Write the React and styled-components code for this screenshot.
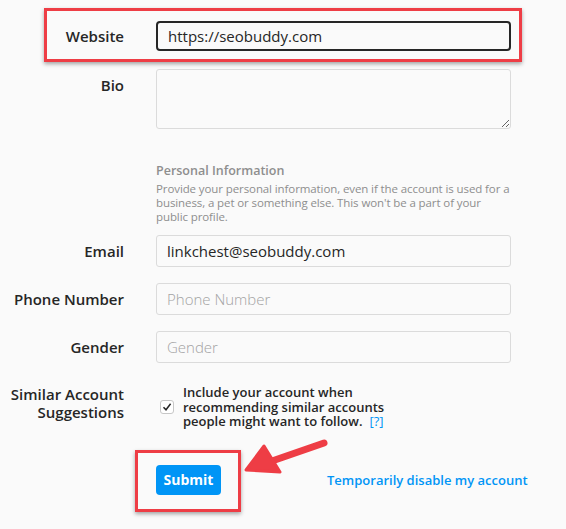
import React from 'react';
import styled, { createGlobalStyle } from 'styled-components';

const GlobalStyle = createGlobalStyle`
  html, body {
    margin: 0;
    padding: 0;
    background: #fafafa;
  }
  body {
    font-family: "Open Sans", "Noto Sans", sans-serif;
    color: #262626;
  }
`;

function Arrow() {
  return (
    <StArrow width="90" height="45" viewBox="0 0 90 45">
      <path d="M82 6 L30 24" stroke="#ee3d45" strokeWidth="7" strokeLinecap="round" />
      <path d="M4 33 L22 9 L38 35 Z" fill="#ee3d45" stroke="#ee3d45" strokeWidth="3" strokeLinejoin="round" />
    </StArrow>
  );
}

function CheckIcon() {
  return (
    <svg width="10" height="10" viewBox="0 0 10 10">
      <path d="M1.5 5.2 L4 7.8 L8.6 1.8" fill="none" stroke="#262626" strokeWidth="1.5" />
    </svg>
  );
}

function App() {
  return (
    <>
      <GlobalStyle />
      <StPage>
        <StForm>
          <StRow $highlight>
            <StLabel>Website</StLabel>
            <StInput $focused defaultValue="https://seobuddy.com" />
          </StRow>

          <StRow>
            <StLabel $top>Bio</StLabel>
            <StTextarea />
          </StRow>

          <StRow>
            <span />
            <StInfo>
              <StInfoTitle>Personal Information</StInfoTitle>
              <StInfoText>
                Provide your personal information, even if the account is used for a
                <br />
                business, a pet or something else. This won't be a part of your
                <br />
                public profile.
              </StInfoText>
            </StInfo>
          </StRow>

          <StRow>
            <StLabel>Email</StLabel>
            <StInput defaultValue="linkchest@seobuddy.com" />
          </StRow>

          <StRow>
            <StLabel>Phone Number</StLabel>
            <StInput placeholder="Phone Number" />
          </StRow>

          <StRow>
            <StLabel>Gender</StLabel>
            <StInput placeholder="Gender" />
          </StRow>

          <StRow>
            <StLabel $multi>Similar Account Suggestions</StLabel>
            <StCheckRow>
              <StCheckBox>
                <CheckIcon />
              </StCheckBox>
              <StCheckText>
                Include your account when recommending similar accounts people
                might want to follow.<StHelp>[?]</StHelp>
              </StCheckText>
            </StCheckRow>
          </StRow>

          <StActions>
            <StSubmitWrap>
              <StSubmit>Submit</StSubmit>
              <Arrow />
            </StSubmitWrap>
            <StLink>Temporarily disable my account</StLink>
          </StActions>
        </StForm>
      </StPage>
    </>
  );
}

const StPage = styled.div`
  width: 566px;
  height: 529px;
  overflow: hidden;
  background: #fafafa;
`;

const StForm = styled.div`
  display: flex;
  flex-direction: column;
  gap: 16px;
  padding: 21px 0 0 0;
`;

const StRow = styled.div`
  position: relative;
  display: grid;
  grid-template-columns: 124px 355px;
  column-gap: 32px;
  align-items: center;

  ${(p) =>
    p.$highlight &&
    `
    margin-bottom: 2px;
    &::after {
      content: '';
      position: absolute;
      left: 44px;
      top: -13px;
      width: 472px;
      height: 48px;
      border: 3px solid #ee3d45;
      box-shadow: 0 2px 4px rgba(0, 0, 0, 0.35);
      pointer-events: none;
    }
  `}
`;

const StLabel = styled.label`
  justify-self: end;
  align-self: ${(p) => (p.$top || p.$multi ? 'start' : 'center')};
  padding-top: ${(p) => (p.$top ? '6px' : '0')};
  margin-top: ${(p) => (p.$multi ? '6px' : '0')};
  width: ${(p) => (p.$multi ? '124px' : 'auto')};
  text-align: right;
  font-size: 15px;
  font-weight: 600;
  line-height: ${(p) => (p.$multi ? '18px' : '20px')};
  color: #262626;
`;

const StInput = styled.input`
  box-sizing: border-box;
  width: 355px;
  height: ${(p) => (p.$focused ? '30px' : '32px')};
  padding: 0 10px;
  border: ${(p) => (p.$focused ? '2px solid #262626' : '1px solid #dbdbdb')};
  border-radius: ${(p) => (p.$focused ? '4px' : '3px')};
  background: #fafafa;
  font-family: "Open Sans", sans-serif;
  font-size: 15px;
  color: #262626;
  outline: none;

  &::placeholder {
    color: #a3a3a3;
    font-weight: 300;
  }
`;

const StTextarea = styled.textarea`
  box-sizing: border-box;
  width: 355px;
  height: 60px;
  border: 1px solid #dbdbdb;
  border-radius: 3px;
  background: #fafafa;
  resize: vertical;
  font-family: "Open Sans", sans-serif;
  display: block;
`;

const StInfo = styled.div`
  padding-top: 18px;
  margin-bottom: -5px;
`;

const StInfoTitle = styled.div`
  font-size: 12.5px;
  font-weight: 600;
  color: #8e8e8e;
  line-height: 16px;
  margin-bottom: 3px;
`;

const StInfoText = styled.div`
  width: 362px;
  white-space: nowrap;
  font-size: 11.5px;
  color: #8e8e8e;
  line-height: 14px;
  letter-spacing: -0.1px;
`;

const StCheckRow = styled.div`
  display: flex;
  align-items: center;
  padding-left: 4px;
  padding-top: 6px;
`;

const StCheckBox = styled.span`
  box-sizing: border-box;
  flex: none;
  display: flex;
  align-items: center;
  justify-content: center;
  width: 14px;
  height: 14px;
  margin-right: 9px;
  border: 1px solid #c7c7c7;
  border-radius: 3px;
  background: #fff;
`;

const StCheckText = styled.div`
  width: 212px;
  font-size: 13px;
  font-weight: 600;
  line-height: 14.5px;
  color: #262626;
`;

const StHelp = styled.a`
  color: #0095f6;
  font-weight: 400;
  margin-left: 7px;
`;

const StActions = styled.div`
  display: flex;
  align-items: center;
  padding: 20px 0 0 156px;
`;

const StSubmitWrap = styled.div`
  position: relative;
  &::before {
    content: '';
    position: absolute;
    left: -21px;
    top: -15px;
    width: 100px;
    height: 56px;
    border: 3px solid #ee3d45;
    box-shadow: 0 2px 4px rgba(0, 0, 0, 0.35);
  }
`;

const StSubmit = styled.button`
  position: relative;
  display: block;
  width: 65px;
  height: 30px;
  border: none;
  border-radius: 4px;
  background: #0095f6;
  color: #fff;
  font-family: "Open Sans", sans-serif;
  font-size: 14px;
  font-weight: 700;
  padding: 0;
`;

const StArrow = styled.svg`
  position: absolute;
  left: 86px;
  top: -28px;
`;

const StLink = styled.a`
  margin-left: 106px;
  color: #0095f6;
  font-size: 13px;
  font-weight: 600;
`;

export default App;
